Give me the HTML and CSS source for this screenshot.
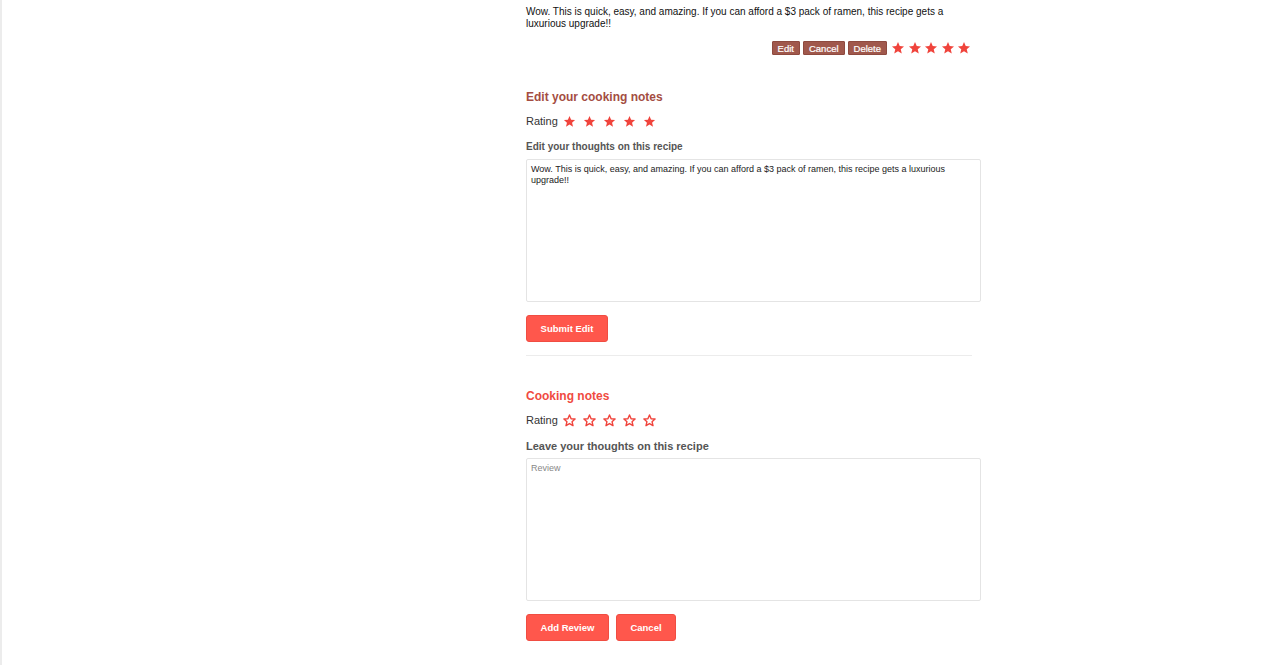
FILE: index.html
```html
<!DOCTYPE html>
<html>
<head>
<meta charset="utf-8">
<link rel="stylesheet" href="styles.css">
</head>
<body>
<svg class="defs" width="0" height="0" aria-hidden="true">
  <defs>
    <path id="star" d="M12 1.8l2.95 6.95 7.35.6-5.6 4.850 1.75 7.3L12 17.6l-6.45 3.9 1.75-7.3L1.7 9.35l7.35-.6z"/>
  </defs>
</svg>
<div class="page">
  <main class="column">
    <section class="review">
      <p class="review-text">Wow. This is quick, easy, and amazing. If you can afford a $3 pack of ramen, this recipe gets a luxurious upgrade!!</p>
      <div class="review-actions">
        <button class="mini-btn">Edit</button>
        <button class="mini-btn">Cancel</button>
        <button class="mini-btn">Delete</button>
        <span class="stars-big">
          <svg viewBox="0 0 24 24"><use href="#star"/></svg>
          <svg viewBox="0 0 24 24"><use href="#star"/></svg>
          <svg viewBox="0 0 24 24"><use href="#star"/></svg>
          <svg viewBox="0 0 24 24"><use href="#star"/></svg>
          <svg viewBox="0 0 24 24"><use href="#star"/></svg>
        </span>
      </div>
    </section>

    <section class="form edit-form">
      <h2 class="form-title brown">Edit your cooking notes</h2>
      <div class="rating-row">
        <span class="rating-label">Rating</span>
        <span class="stars">
          <svg viewBox="0 0 24 24"><use href="#star"/></svg>
          <svg viewBox="0 0 24 24"><use href="#star"/></svg>
          <svg viewBox="0 0 24 24"><use href="#star"/></svg>
          <svg viewBox="0 0 24 24"><use href="#star"/></svg>
          <svg viewBox="0 0 24 24"><use href="#star"/></svg>
        </span>
      </div>
      <label class="field-label">Edit your thoughts on this recipe</label>
      <textarea class="textarea">Wow. This is quick, easy, and amazing. If you can afford a $3 pack of ramen, this recipe gets a luxurious upgrade!!</textarea>
      <div class="btn-row">
        <button class="btn btn-submit">Submit Edit</button>
      </div>
    </section>

    <hr class="divider">

    <section class="form new-form">
      <h2 class="form-title red">Cooking notes</h2>
      <div class="rating-row">
        <span class="rating-label">Rating</span>
        <span class="stars empty">
          <svg viewBox="0 0 24 24"><use href="#star"/></svg>
          <svg viewBox="0 0 24 24"><use href="#star"/></svg>
          <svg viewBox="0 0 24 24"><use href="#star"/></svg>
          <svg viewBox="0 0 24 24"><use href="#star"/></svg>
          <svg viewBox="0 0 24 24"><use href="#star"/></svg>
        </span>
      </div>
      <label class="field-label lg">Leave your thoughts on this recipe</label>
      <textarea class="textarea" placeholder="Review"></textarea>
      <div class="btn-row">
        <button class="btn btn-add">Add Review</button>
        <button class="btn btn-cancel">Cancel</button>
      </div>
    </section>
  </main>
</div>
</body>
</html>
```

FILE: styles.css
```css
* { box-sizing: border-box; }
html, body { margin: 0; padding: 0; background: #fff; }
body {
  font-family: "Liberation Sans", Arial, sans-serif;
  color: #222;
  height: 665px;
  overflow: hidden;
}
.defs { position: absolute; width: 0; height: 0; }
.page {
  border-left: 2px solid #ececec;
  height: 665px;
  padding-left: 524px;
}
.column {
  width: 455px;
  display: flex;
  flex-direction: column;
}
.review { width: 446px; padding-top: 6px; }
.review-text {
  margin: 0;
  font-size: 10px;
  line-height: 12px;
  color: #111;
}
.review-actions {
  display: flex;
  justify-content: flex-end;
  align-items: center;
  gap: 3px;
  margin-top: 11px;
}
.mini-btn {
  font-family: "Liberation Sans", Arial, sans-serif;
  font-size: 9.5px;
  line-height: 12px;
  padding: 1px 5px;
  height: 14px;
  color: #fff;
  background: #a0584c;
  border: 1px solid #8e4a3f;
  border-radius: 1px;
  -webkit-text-stroke: 0.2px #fff;
}
.stars-big {
  display: flex;
  gap: 2.5px;
  margin-left: 1px;
  margin-right: 1px;
}
.stars-big svg {
  width: 14px;
  height: 14px;
  fill: #f0443c;
}
.form { display: flex; flex-direction: column; }
.edit-form { margin-top: 35px; }
.form-title {
  margin: 0;
  font-size: 12px;
  font-weight: bold;
  line-height: 15px;
}
.brown { color: #a44d42; }
.red { color: #f04a41; }
.rating-row {
  display: flex;
  align-items: center;
  margin-top: 8px;
  height: 16px;
}
.rating-label { font-size: 11px; color: #333; margin-right: 5px; }
.stars { display: flex; gap: 7px; }
.stars svg {
  width: 13px;
  height: 13px;
  fill: #f0443c;
}
.stars.empty svg {
  fill: none;
  stroke: #f0443c;
  stroke-width: 2.6;
  stroke-linejoin: round;
}
.field-label {
  display: block;
  margin-top: 12px;
  font-size: 10px;
  font-weight: bold;
  color: #555;
  line-height: 12px;
}
.field-label.lg { font-size: 11px; }
.textarea {
  margin-top: 6px;
  width: 455px;
  height: 143px;
  border: 1px solid #e4e4e4;
  border-radius: 2px;
  padding: 4px 4px;
  font-family: "Liberation Sans", Arial, sans-serif;
  font-size: 9px;
  line-height: 11px;
  color: #222;
  resize: none;
  outline: none;
}
.textarea::placeholder { color: #888; }
.btn-row { display: flex; gap: 7px; margin-top: 13px; }
.btn {
  font-family: "Liberation Sans", Arial, sans-serif;
  font-size: 9.5px;
  font-weight: bold;
  color: #fff;
  background: #ff574c;
  border: 1px solid #f04d42;
  border-radius: 3px;
  height: 27px;
  padding: 0 10px;
}
.btn-submit { width: 82px; }
.btn-add { width: 83px; }
.btn-cancel { width: 60px; }
.divider {
  width: 446px;
  margin: 13px 0 0 0;
  border: 0;
  border-top: 1px solid #ececec;
}
.new-form { margin-top: 33px; }
```
